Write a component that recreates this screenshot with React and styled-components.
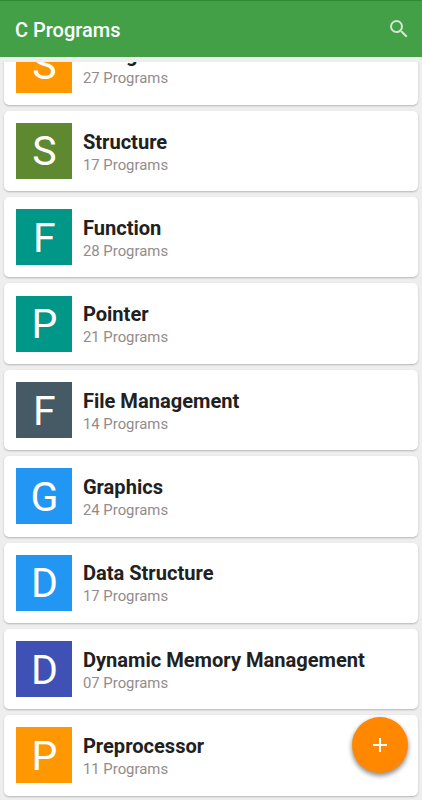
import React from "react";
import styled, { createGlobalStyle } from "styled-components";

const GlobalStyle = createGlobalStyle`
  * { box-sizing: border-box; }
  body { margin: 0; background: #eeeeee; font-family: Roboto, "Noto Sans", sans-serif; }
`;

const Screen = styled.div`
  position: relative;
  display: flex;
  flex-direction: column;
  height: 800px;
  overflow: hidden;
  background: #eeeeee;
`;

const AppBar = styled.header`
  display: flex;
  flex: none;
  align-items: center;
  justify-content: space-between;
  height: 57px;
  padding: 1px 11px 0 15px;
  border-top: 1px solid #2d8b31;
  background: #43a047;
`;

const Heading = styled.h1`
  margin: 0;
  color: #ffffff;
  font-size: 20px;
  font-weight: 500;
  line-height: 24px;
`;

const SearchButton = styled.button`
  display: flex;
  margin: 0 0 2px;
  padding: 0;
  border: 0;
  background: none;
  color: #d0e7d1;
`;

const Viewport = styled.main`
  flex: 1;
  min-height: 0;
  margin-top: 4px;
  border-top: 1px solid #eeeeee;
  overflow: hidden;
`;

const List = styled.div`
  display: flex;
  flex-direction: column;
  gap: 6px;
  margin-top: -37.6px;
  padding: 0 4px;
`;

const Card = styled.article`
  display: flex;
  flex: none;
  align-items: center;
  height: 80.36px;
  padding: 0 12.4px;
  border-radius: 5px;
  background: #ffffff;
  box-shadow: 0 1px 2px rgba(0, 0, 0, 0.24);
`;

const Tile = styled.div`
  display: flex;
  flex: none;
  align-items: center;
  justify-content: center;
  width: 56px;
  height: 56px;
  padding-top: 1px;
  background: ${(p) => p.$color};
  color: #ffffff;
  font-size: 41px;
  line-height: 56px;
`;

const Details = styled.div`
  display: flex;
  flex-direction: column;
  margin-left: 10.5px;
  padding-top: 4px;
`;

const Title = styled.h2`
  margin: 0;
  color: #212121;
  font-size: 20.08px;
  font-weight: 700;
  line-height: 24px;
  white-space: nowrap;
`;

const Count = styled.p`
  margin: 0;
  color: #938b8b;
  font-size: 14.9px;
  line-height: 22.6px;
`;

const AddButton = styled.button`
  position: absolute;
  right: 14px;
  bottom: 27px;
  display: flex;
  align-items: center;
  justify-content: center;
  width: 56px;
  height: 56px;
  padding: 0;
  border: 0;
  border-radius: 50%;
  background: #ff8800;
  color: #ffffff;
  box-shadow: 0 3px 5px rgba(0, 0, 0, 0.4), 0 1px 5px rgba(0, 0, 0, 0.12);
`;

const topics = [
  { name: "String", count: "27", color: "#ff9800" },
  { name: "Structure", count: "17", color: "#5f8930" },
  { name: "Function", count: "28", color: "#009688" },
  { name: "Pointer", count: "21", color: "#009688" },
  { name: "File Management", count: "14", color: "#455a64" },
  { name: "Graphics", count: "24", color: "#2196f3" },
  { name: "Data Structure", count: "17", color: "#2196f3" },
  { name: "Dynamic Memory Management", count: "07", color: "#3f51b5" },
  { name: "Preprocessor", count: "11", color: "#ff9800" },
];

function SearchIcon() {
  return (
    <svg width="24" height="24" viewBox="0 0 24 24" fill="currentColor">
      <path d="M15.5 14h-.79l-.28-.27A6.47 6.47 0 0 0 16 9.5 6.5 6.5 0 1 0 9.5 16c1.61 0 3.09-.59 4.23-1.57l.27.28v.79l5 4.99L20.49 19l-4.99-5zm-6 0a4.5 4.5 0 1 1 0-9 4.5 4.5 0 0 1 0 9z" />
    </svg>
  );
}

function PlusIcon() {
  return (
    <svg width="24" height="24" viewBox="0 0 24 24" fill="currentColor">
      <path d="M19 13h-6v6h-2v-6H5v-2h6V5h2v6h6v2z" />
    </svg>
  );
}

export default function App() {
  return (
    <>
      <GlobalStyle />
      <Screen>
        <AppBar>
          <Heading>C Programs</Heading>
          <SearchButton aria-label="Search">
            <SearchIcon />
          </SearchButton>
        </AppBar>
        <Viewport>
          <List>
            {topics.map((topic) => (
              <Card key={topic.name}>
                <Tile $color={topic.color}>{topic.name[0]}</Tile>
                <Details>
                  <Title>{topic.name}</Title>
                  <Count>{topic.count} Programs</Count>
                </Details>
              </Card>
            ))}
          </List>
        </Viewport>
        <AddButton aria-label="Add">
          <PlusIcon />
        </AddButton>
      </Screen>
    </>
  );
}
